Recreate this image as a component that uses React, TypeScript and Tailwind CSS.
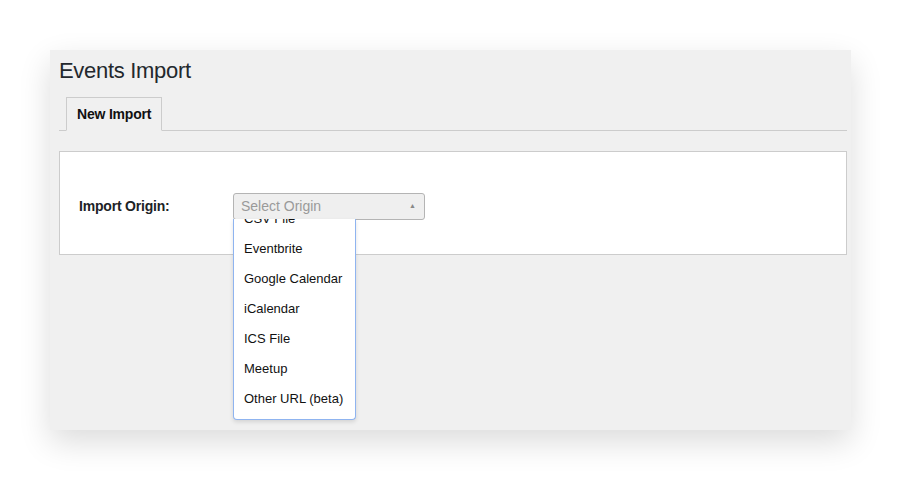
import React from 'react';

const origins = ['CSV File', 'Eventbrite', 'Google Calendar', 'iCalendar', 'ICS File', 'Meetup', 'Other URL (beta)'];

const App: React.FC = () => {
    return (
        <div className="w-[911px] h-[478px] bg-white pt-[50px] pl-[50px] font-['Liberation_Sans',Arial,sans-serif]">
            <div className="w-[801px] h-[380px] bg-[#f0f0f0] shadow-[0_12px_30px_rgba(0,0,0,0.14)] pl-[9px] pr-[4px] pt-[6px]">
                {/* Title */}
                <h1 className="text-[22px] leading-[30px] tracking-[-0.3px] text-[#23282d] font-normal">Events Import</h1>

                {/* Tabs */}
                <div className="mt-[11px] flex border-b border-[#cccccc] pl-[7px]">
                    <div className="h-[34px] -mb-px px-[10px] flex items-center border border-[#cccccc] border-b-[#f0f0f0] bg-[#f0f0f0] text-[14px] font-bold tracking-[-0.2px] text-[#111]">
                        New Import
                    </div>
                </div>

                {/* Form box */}
                <div className="mt-[20px] h-[104px] bg-white border border-[#cccccc] flex items-center pl-[19px] pt-[6px]">
                    <label className="w-[154px] text-[14px] font-bold tracking-[-0.2px] text-[#1d2327]">Import Origin:</label>
                    <div className="relative">
                        <div className="w-[192px] h-[27px] bg-[#efefef] border border-[#b4b4b4] rounded-[3px] flex items-center justify-between pl-[7px] pr-[8px]">
                            <span className="text-[14px] text-[#9a9a9a]">Select Origin</span>
                            <span className="text-[7px] text-[#888]">▲</span>
                        </div>

                        {/* Dropdown */}
                        <div className="absolute left-0 top-[26px] w-[123px] h-[201px] bg-white border border-t-0 border-[#8fb4f0] rounded-b-[4px] shadow-[0_2px_4px_rgba(0,0,0,0.12)] overflow-hidden z-10">
                            <ul className="-mt-[15px]">
                                {origins.map((o) => (
                                    <li key={o} className="h-[30px] flex items-center pl-[10px] text-[13px] text-[#111] whitespace-nowrap">
                                        {o}
                                    </li>
                                ))}
                            </ul>
                        </div>
                    </div>
                </div>
            </div>
        </div>
    );
};

export default App;
